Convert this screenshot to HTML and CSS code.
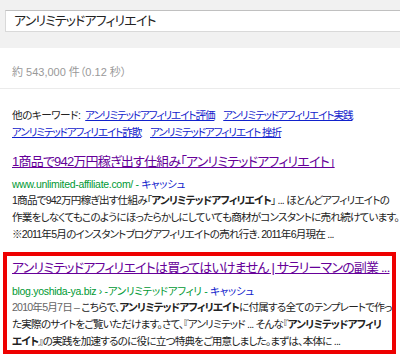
FILE: index.html
```html
<!DOCTYPE html>
<html lang="ja">
<head>
    <meta charset="UTF-8">
    <title>アンリミテッドアフィリエイト - 検索</title>
    <link rel="stylesheet" href="styles.css">
</head>
<body>
    <div class="topbar">
        <div class="searchbox">アンリミテッドアフィリエイト</div>
    </div>

    <div class="stats">約 543,000 件（0.12 秒）</div>

    <div class="related">
        <div class="line">
            <span class="label">他のキーワード:</span>
            <a href="#">アンリミテッドアフィリエイト評価</a>
            <a href="#">アンリミテッドアフィリエイト実践</a>
        </div>
        <div class="line">
            <a href="#">アンリミテッドアフィリエイト詐欺</a>
            <a href="#">アンリミテッドアフィリエイト 挫折</a>
        </div>
    </div>

    <div class="result">
        <a class="title" href="#">1商品で942万円稼ぎ出す仕組み「アンリミテッドアフィリエイト」</a>
        <div class="url">www.unlimited-affiliate.com/ - <a href="#">キャッシュ</a></div>
        <div class="snippet">
            1商品で942万円稼ぎ出す仕組み「<b>アンリミテッドアフィリエイト</b>」 ... ほとんどアフィリエイトの<br>
            作業をしなくてもこのようにほったらかしにしていても商材がコンスタントに売れ続けています。<br>
            ※2011年5月のインスタントブログアフィリエイトの売れ行き. 2011年6月現在 ...
        </div>
    </div>

    <div class="result highlight">
        <a class="title" href="#">アンリミテッドアフィリエイトは買ってはいけません | サラリーマンの副業 ...</a>
        <div class="url">blog.yoshida-ya.biz › -アンリミテッドアフィリ - <a href="#">キャッシュ</a></div>
        <div class="snippet">
            <span class="date">2010年5月7日 – </span>こちらで、<b>アンリミテッドアフィリエイト</b>に付属する全てのテンプレートで作っ<br>
            た実際のサイトをご覧いただけます。さて、『アンリミテッド ... そんな『<b>アンリミテッドアフィリ</b><br>
            <b>エイト</b>』の実践を加速するのに役に立つ特典をご用意しました。まずは、本体に ...
        </div>
    </div>
</body>
</html>
```

FILE: styles.css
```css
body {
    margin: 0;
    overflow: hidden;
    background: #fff;
    color: #222;
    font-family: "Liberation Sans", "Noto Sans CJK JP", sans-serif;
    font-feature-settings: "palt";
    font-size: 11px;
}

a {
    color: #1122cc;
}

.topbar {
    height: 48px;
    box-sizing: border-box;
    padding: 10px 0 0 5px;
    background: #f1f1f1;
}

.searchbox {
    height: 22px;
    box-sizing: border-box;
    padding-left: 8px;
    background: #fff;
    border: 1px solid #d9d9d9;
    border-top-color: #c0c0c0;
    border-right: none;
    font-size: 13px;
    letter-spacing: -0.9px;
    line-height: 20px;
    color: #222;
    white-space: nowrap;
}

.stats {
    height: 41px;
    box-sizing: border-box;
    padding: 16px 0 0 12px;
    border-bottom: 1px solid #ebebeb;
    color: #999;
    font-size: 11px;
    line-height: 16px;
}

.related {
    margin-top: 18px;
    padding-left: 12px;
    font-size: 10.6px;
    letter-spacing: -1.1px;
    line-height: 17px;
}

.related .line {
    white-space: nowrap;
}

.related .label {
    margin-right: 3px;
    letter-spacing: -0.5px;
}

.related a {
    margin-right: 7px;
}

.result {
    margin-top: 11px;
    padding-left: 12px;
    white-space: nowrap;
    overflow: hidden;
}

.result .title {
    display: block;
    color: #660099;
    font-size: 13px;
    letter-spacing: -0.8px;
    line-height: 20px;
}

.result .url {
    margin-top: 4px;
    color: #009933;
    font-size: 10.5px;
    letter-spacing: -0.3px;
    line-height: 16px;
}

.result .url a {
    text-decoration: none;
}

.result .snippet {
    font-size: 10.6px;
    letter-spacing: -0.8px;
    line-height: 17px;
    color: #222;
}

.result .snippet .date {
    color: #666;
}

.highlight {
    margin: 9px 0 0 3px;
    width: 393px;
    box-sizing: border-box;
    padding: 2px 0 0 5px;
    border: 4px solid #ee0000;
}

.highlight .url {
    margin-top: 5px;
}
```
